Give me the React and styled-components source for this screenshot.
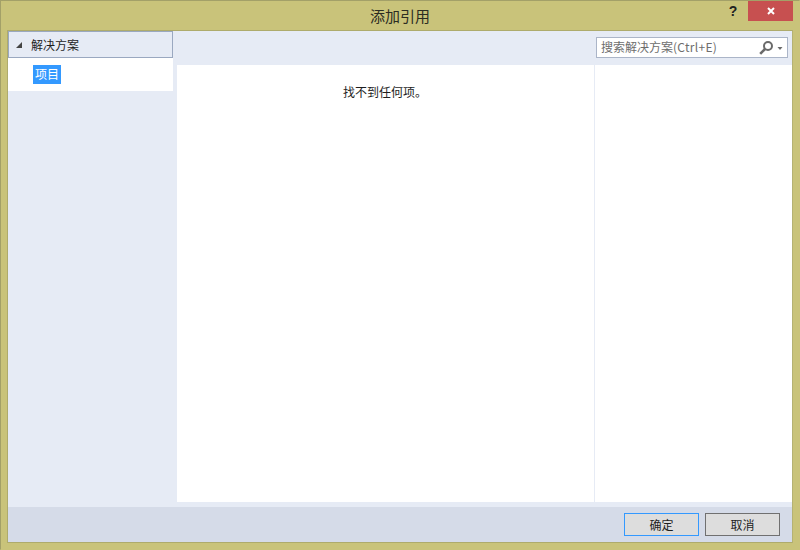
import React from 'react';
import styled, { createGlobalStyle } from 'styled-components';

const Global = createGlobalStyle`
  html, body { margin: 0; padding: 0; width: 800px; height: 550px; overflow: hidden; }
  * { box-sizing: border-box; }
`;
const cjk = `"Noto Sans CJK SC", "Liberation Sans", sans-serif`;

const Win = styled.div`
  width: 800px; height: 550px; background: #c9c37a;
  border: 1px solid #a3a068; border-right-color: #c9c37a; border-bottom-color: #c9c37a;
  display: flex; flex-direction: column; font-family: ${cjk}; color: #1e1e1e;
`;
const TitleBar = styled.div`
  height: 29px; display: grid; grid-template-columns: 1fr auto 1fr; flex: none;
`;
const Title = styled.div`
  grid-column: 2; font-size: 15px; line-height: 29px; color: #2c2c22;
`;
const Controls = styled.div`
  grid-column: 3; display: flex; justify-content: flex-end; align-items: flex-start; padding-right: 6px;
`;
const Help = styled.div`
  width: 14px; margin-right: 8px; font: bold 14px/20px "Liberation Sans", sans-serif; text-align: center; color: #222;
`;
const Close = styled.div`
  width: 45px; height: 20px; background: #c75050; display: flex; align-items: center; justify-content: center;
`;
const Body = styled.div`
  flex: none; width: 786px; height: 513px; margin-left: 6px; border: 1px solid #aeab6c; border-right-color: #b5b273;
  display: flex; flex-direction: column; background: #e6ebf5;
`;
const Main = styled.div`flex: 1; display: flex; min-height: 0;`;
const Side = styled.div`width: 165px; flex: none; display: flex; flex-direction: column;`;
const TreeHead = styled.div`
  height: 27px; border: 1px solid #9aa8c0; display: flex; align-items: center; padding-left: 7px; gap: 9px; font-size: 12px;
`;
const TreeRow = styled.div`
  height: 33px; background: #fff; display: flex; align-items: flex-start; padding: 7px 0 0 25px;
`;
const Selected = styled.span`
  background: #3399ff; color: #fff; font-size: 12px; line-height: 17px; padding: 0 2px; height: 19px; display: block;
`;
const Content = styled.div`
  flex: 1; margin-left: 4px; display: flex; flex-direction: column; min-width: 0;
`;
const SearchBar = styled.div`
  height: 34px; flex: none; display: flex; justify-content: flex-end; padding: 6px 4px 0 0;
`;
const Search = styled.div`
  width: 192px; height: 21px; background: #fff; border: 1px solid #abb5c8; display: flex; align-items: center; padding: 0 3px 0 4px;
`;
const Placeholder = styled.span`flex: 1; font-size: 12px; line-height: 17px; padding-bottom: 2px; color: #6d6d6d; white-space: nowrap;`;
const Latin = styled.span`letter-spacing: 0.3px;`;
const Panes = styled.div`
  height: 437px; flex: none; background: #fff; display: flex;
`;
const ListPane = styled.div`
  width: 418px; border-right: 1px solid #e6ebf5; text-align: center; font-size: 12px; padding-top: 18px; padding-right: 1px; line-height: 18px;
`;
const Footer = styled.div`
  height: 35px; margin-top: 5px; flex: none; background: #d5dbe8; display: flex; justify-content: flex-end; gap: 6px; padding: 6px 12px 0 0;
`;
const Button = styled.div`
  width: 75px; height: 23px; background: #dddddd; border-width: 1px; border-style: solid;
  border-color: ${p => (p.$primary ? '#3399ff' : '#707070')};
  font-size: 12px; display: flex; align-items: center; justify-content: center; color: #1e1e1e;
`;

export default function App() {
  return (
    <>
      <Global />
      <Win>
        <TitleBar>
          <Title>添加引用</Title>
          <Controls>
            <Help>?</Help>
            <Close>
              <svg width="8" height="8" viewBox="0 0 8 8"><path d="M1 1 7 7M7 1 1 7" stroke="#fff" strokeWidth="2" /></svg>
            </Close>
          </Controls>
        </TitleBar>
        <Body>
          <Main>
            <Side>
              <TreeHead>
                <svg width="6" height="6" viewBox="0 0 6 6"><path d="M6 0V6H0Z" fill="#444" /></svg>
                <span>解决方案</span>
              </TreeHead>
              <TreeRow><Selected>项目</Selected></TreeRow>
            </Side>
            <Content>
              <SearchBar>
                <Search>
                  <Placeholder>搜索解决方案<Latin>(Ctrl+E)</Latin></Placeholder>
                  <svg width="27" height="14" viewBox="0 0 27 14">
                    <circle cx="11" cy="5" r="4" fill="none" stroke="#6a6a6a" strokeWidth="2" />
                    <path d="M8 8 3.2 12.8" stroke="#6a6a6a" strokeWidth="2.6" />
                    <path d="M20.5 6h5l-2.5 3Z" fill="#6a6a6a" />
                  </svg>
                </Search>
              </SearchBar>
              <Panes>
                <ListPane>找不到任何项。</ListPane>
              </Panes>
            </Content>
          </Main>
          <Footer>
            <Button $primary>确定</Button>
            <Button>取消</Button>
          </Footer>
        </Body>
      </Win>
    </>
  );
}
